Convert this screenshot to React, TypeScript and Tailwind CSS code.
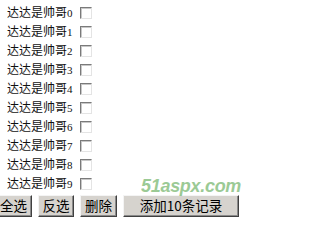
import React from "react"

const ROWS = Array.from({ length: 10 }, (_, i) => i)

function Checkbox() {
  return (
    <span className="inline-block h-[12px] w-[12px] border border-t-[#7a7a7a] border-l-[#7a7a7a] border-r-[#e4e4e4] border-b-[#e4e4e4] bg-white shadow-[inset_1px_1px_0_#c8c8c8]" />
  )
}

function Btn({ children, className = "" }: { children: React.ReactNode; className?: string }) {
  return (
    <button
      className={
        "h-[22px] border border-t-[#f4f4f4] border-l-[#f4f4f4] border-r-[#404040] border-b-[#404040] bg-[#d6d3ce] text-[13.5px] leading-none text-black shadow-[inset_-1px_-1px_0_#8a8a8a] " +
        className
      }
    >
      {children}
    </button>
  )
}

export default function App() {
  return (
    <div className="relative h-[222px] w-[247px] overflow-hidden bg-white font-['Noto_Sans_CJK_SC','Liberation_Sans',sans-serif] text-black">
      <div className="flex flex-col pt-[3px]">
        {ROWS.map((i) => (
          <div key={i} className="flex h-[19px] items-center">
            <span className="w-[80px] pl-[7px] text-[12px] leading-none whitespace-nowrap text-[#111]">
              达达是帅哥<span className="font-['Liberation_Serif',serif] text-[11px]">{i}</span>
            </span>
            <Checkbox />
          </div>
        ))}
      </div>
      <div className="ml-[-5px] mt-[2px] flex items-center gap-[6px]">
        <Btn className="w-[37px]">全选</Btn>
        <Btn className="w-[36px]">反选</Btn>
        <Btn className="w-[37px]">删除</Btn>
        <Btn className="w-[116px]">添加10条记录</Btn>
      </div>
      <span className="pointer-events-none absolute left-[141px] top-[177px] font-['Liberation_Sans',sans-serif] text-[18px] font-bold italic leading-none tracking-[-0.3px] text-[#5aa84f] opacity-60">
        51aspx.com
      </span>
    </div>
  )
}
